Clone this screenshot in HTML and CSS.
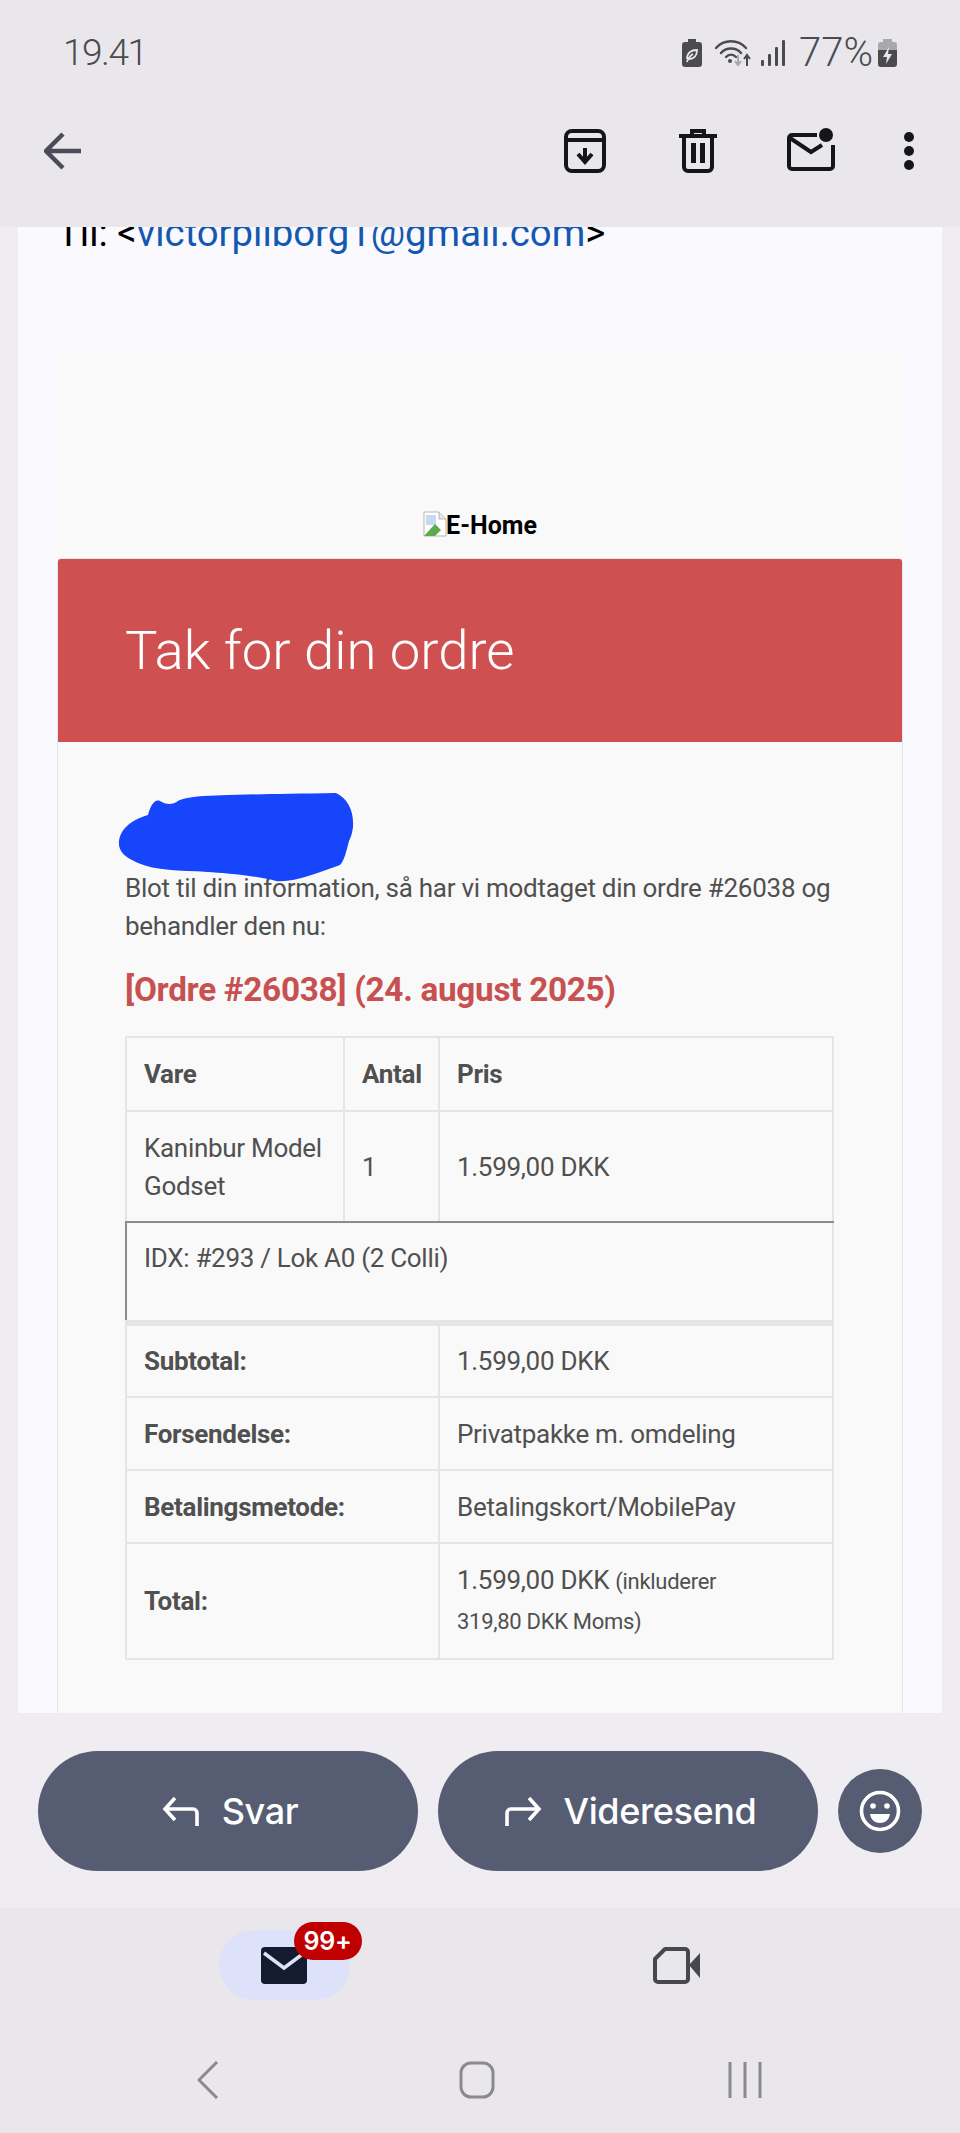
FILE: index.html
```html
<!DOCTYPE html>
<html lang="da">

<head>
    <meta charset="UTF-8">
    <meta name="viewport" content="width=device-width, initial-scale=1.0">
    <title>Tak for din ordre</title>
    <link rel="stylesheet" href="styles.css">
</head>

<body>
    <!-- status bar -->
    <div class="status">
        <span class="clock">19.41</span>
        <div class="statusIcons">
            <svg class="sIcon" width="20" height="28" viewBox="0 0 20 28">
                <path d="M6 0h8v3h3a3 3 0 0 1 3 3v19a3 3 0 0 1-3 3H3a3 3 0 0 1-3-3V6a3 3 0 0 1 3-3h3z" fill="#4b4b4f" />
                <path d="M5 20c0-6 4-9 10-9 0 6-3 9-8 9M5 23c1-4 3-6 6-8" fill="none" stroke="#e9e7ec" stroke-width="1.8" />
            </svg>
            <svg class="sIcon wifi" width="37" height="28" viewBox="0 0 37 28">
                <g fill="none" stroke="#4b4b4f" stroke-width="2.4" stroke-linecap="round">
                    <path d="M1 9C9 0 23 0 31 9" />
                    <path d="M6 14c5-6 15-6 20 0" />
                    <path d="M11 18c3-3 7-3 10 0" />
                </g>
                <circle cx="15" cy="22" r="2" fill="#4b4b4f" />
                <path d="M23 16v10M20 22l3 4 3-4" fill="none" stroke="#a9a9ad" stroke-width="2" />
                <path d="M32 27V17M29 20l3-4 3 4" fill="none" stroke="#4b4b4f" stroke-width="2" />
            </svg>
            <svg class="sIcon signal" width="25" height="26" viewBox="0 0 25 26">
                <g fill="#4b4b4f">
                    <rect x="0" y="20" width="3" height="6" rx="1" />
                    <rect x="7" y="14" width="3" height="12" rx="1" />
                    <rect x="14" y="7" width="3" height="19" rx="1" />
                    <rect x="21" y="0" width="3" height="26" rx="1" />
                </g>
            </svg>
            <span class="percent">77%</span>
            <svg class="sIcon" width="19" height="28" viewBox="0 0 19 28">
                <path d="M5 0h9v3h2a3 3 0 0 1 3 3v5H0V6a3 3 0 0 1 3-3h2z" fill="#a9a9ad" />
                <path d="M0 11h19v14a3 3 0 0 1-3 3H3a3 3 0 0 1-3-3z" fill="#4b4b4f" />
                <path d="M11 8l-6 10h4l-1 7 6-10h-4z" fill="#e9e7ec" />
            </svg>
        </div>
    </div>

    <!-- toolbar -->
    <div class="toolbar">
        <svg class="backArrow" width="38" height="38" viewBox="0 0 38 38">
            <path d="M37 19H3M19 2L2 19l17 17" fill="none" stroke="#4a4d58" stroke-width="4.500" />
        </svg>
        <div class="toolIcons">
            <svg class="tool" width="48" height="46" viewBox="0 0 48 46">
                <rect x="5" y="3" width="38" height="40" rx="6" fill="none" stroke="#15161a" stroke-width="4" />
                <path d="M5 12h38" stroke="#15161a" stroke-width="4" />
                <path d="M24 20v13M17 26l7 8 7-8" fill="none" stroke="#15161a" stroke-width="4" />
            </svg>
            <svg class="tool" width="48" height="46" viewBox="0 0 48 46">
                <path d="M5 8h38M18 8V3h12v5" fill="none" stroke="#15161a" stroke-width="4" />
                <path d="M10 8v31a4 4 0 0 0 4 4h20a4 4 0 0 0 4-4V8" fill="none" stroke="#15161a" stroke-width="4" />
                <path d="M19.500 15v20M28.500 15v20" stroke="#15161a" stroke-width="5" />
            </svg>
            <svg class="tool" width="48" height="46" viewBox="0 0 48 46">
                <path d="M30 7H5a3 3 0 0 0-3 3v28a3 3 0 0 0 3 3h38a3 3 0 0 0 3-3V17" fill="none" stroke="#15161a" stroke-width="4" />
                <path d="M3 10l21 14 11-7" fill="none" stroke="#15161a" stroke-width="4" />
                <circle cx="39" cy="7" r="7" fill="#15161a" />
            </svg>
            <svg class="tool dots" width="24" height="46" viewBox="0 0 24 46">
                <circle cx="12" cy="9" r="5" fill="#15161a" />
                <circle cx="12" cy="23" r="5" fill="#15161a" />
                <circle cx="12" cy="37" r="5" fill="#15161a" />
            </svg>
        </div>
    </div>

    <!-- the mail -->
    <div class="mailArea">
        <div class="mailBody">
            <p class="toLine">Til: &lt;<a class="toMail" href="#">victorpilborg1@gmail.com</a>&gt;</p>

            <div class="logoBox">
                <svg class="brokenImg" width="24" height="26" viewBox="0 0 24 26">
                    <path d="M1 1h15l7 7v17H1z" fill="#fff" stroke="#b5b5b5" />
                    <path d="M16 1v7h7" fill="#dfe6f5" stroke="#b5b5b5" />
                    <path d="M3 4h10v10H3z" fill="#c9d8f2" />
                    <path d="M1 25l11-12 6 6-6 6z" fill="#5fa84b" />
                </svg>
                <span class="logoText">E-Home</span>
            </div>

            <div class="card">
                <div class="cardHead">
                    <h1 class="thanks">Tak for din ordre</h1>
                </div>
                <div class="cardContent">
                    <!-- scribble that hides the name -->
                    <svg class="scribble" width="240" height="92" viewBox="0 0 240 92">
                        <path d="M1 50C3 36 16 28 30 24C33 12 38 8 42 10C48 14 55 14 60 10C72 4 95 4 218 2C230 8 236 20 235 36C234 44 232 48 231 50C228 62 226 70 222 74C200 82 175 92 158 90C135 84 105 82 90 81C60 79 38 80 20 72C6 66 0 60 1 50Z" fill="#1745fb" />
                    </svg>
                    <p class="intro">Blot til din information, så har vi modtaget din ordre #26038 og behandler den nu:</p>
                    <h2 class="orderTitle">[Ordre #26038] (24. august 2025)</h2>

                    <table class="orderTab">
                        <colgroup>
                            <col class="col1">
                            <col class="col2">
                            <col>
                        </colgroup>
                        <tr class="headRow">
                            <th>Vare</th>
                            <th>Antal</th>
                            <th>Pris</th>
                        </tr>
                        <tr class="itemRow">
                            <td>Kaninbur Model Godset</td>
                            <td>1</td>
                            <td>1.599,00 DKK</td>
                        </tr>
                        <tr class="noteRow">
                            <td colspan="3">IDX: #293 / Lok A0 (2 Colli)</td>
                        </tr>
                        <tr class="sumRow firstSum">
                            <th colspan="2">Subtotal:</th>
                            <td>1.599,00 DKK</td>
                        </tr>
                        <tr class="sumRow">
                            <th colspan="2">Forsendelse:</th>
                            <td>Privatpakke m. omdeling</td>
                        </tr>
                        <tr class="sumRow">
                            <th colspan="2">Betalingsmetode:</th>
                            <td>Betalingskort/MobilePay</td>
                        </tr>
                        <tr class="totalRow">
                            <th colspan="2">Total:</th>
                            <td>1.599,00 DKK <small class="tax">(inkluderer<br>319,80 DKK Moms)</small></td>
                        </tr>
                    </table>
                </div>
            </div>
        </div>
    </div>

    <!-- reply buttons -->
    <div class="actions">
        <button class="actBtn">
            <svg width="38" height="30" viewBox="0 0 38 30">
                <path d="M35 30V17a4 4 0 0 0-4-4H4M13 2L3 13l10 11" fill="none" stroke="#fff" stroke-width="3.600" />
            </svg>
            <span>Svar</span>
        </button>
        <button class="actBtn">
            <svg width="38" height="30" viewBox="0 0 38 30">
                <path d="M3 30V17a4 4 0 0 1 4-4h27M25 2l10 11-10 11" fill="none" stroke="#fff" stroke-width="3.600" />
            </svg>
            <span>Videresend</span>
        </button>
        <button class="emojiBtn">
            <svg width="42" height="42" viewBox="0 0 42 42">
                <circle cx="21" cy="21" r="18.500" fill="none" stroke="#fff" stroke-width="3.600" />
                <circle cx="14" cy="16" r="2.800" fill="#fff" />
                <circle cx="28" cy="16" r="2.800" fill="#fff" />
                <path d="M11 24h20c-1 6-5 9-10 9s-9-3-10-9z" fill="#fff" />
            </svg>
        </button>
    </div>

    <!-- mail / meet tabs -->
    <div class="tabs">
        <div class="tabItem">
            <div class="mailPill">
                <svg width="46" height="37" viewBox="0 0 46 37">
                    <rect width="46" height="37" rx="4" fill="#141b2e" />
                    <path d="M3 6l20 15L43 6" fill="none" stroke="#dde1f9" stroke-width="3.500" />
                </svg>
                <span class="badge">99+</span>
            </div>
        </div>
        <div class="tabItem">
            <svg width="47" height="37" viewBox="0 0 47 37">
                <path d="M12 2h20a3 3 0 0 1 3 3v27a3 3 0 0 1-3 3H5a3 3 0 0 1-3-3V12z" fill="none" stroke="#47484f" stroke-width="4" stroke-linejoin="round" />
                <path d="M36 18L47 6v25z" fill="#47484f" />
            </svg>
        </div>
    </div>

    <!-- android nav -->
    <div class="navBar">
        <svg width="22" height="38" viewBox="0 0 22 38">
            <path d="M20 1L2 19l18 18" fill="none" stroke="#8a8a8e" stroke-width="3" />
        </svg>
        <svg class="homeBtn" width="36" height="38" viewBox="0 0 36 38">
            <rect x="2" y="2" width="32" height="34" rx="10" fill="none" stroke="#8a8a8e" stroke-width="3" />
        </svg>
        <svg width="36" height="38" viewBox="0 0 36 38">
            <path d="M3 1v36M18 1v36M33 1v36" stroke="#8a8a8e" stroke-width="3" />
        </svg>
    </div>
</body>

</html>
```

FILE: styles.css
```css
* {
    box-sizing: border-box;
}

html,
body {
    margin: 0;
    padding: 0;
}

body {
    width: 960px;
    height: 2133px;
    overflow: hidden;
    display: flex;
    flex-direction: column;
    background-color: #e9e7ec;
    font-family: Roboto, "Liberation Sans", sans-serif;
}

.status {
    height: 105px;
    padding: 0 63px;
    display: flex;
    align-items: center;
    justify-content: space-between;
    color: #4b4b4f;
}

.clock {
    font-size: 37px;
    font-weight: 300;
    letter-spacing: -1.500px;
}

.percent {
    font-size: 40px;
    font-weight: 300;
}

.statusIcons {
    display: flex;
    align-items: center;
}

.wifi {
    margin-left: 13px;
}

.signal {
    margin-left: 9px;
}

.percent {
    margin: 0 5px 0 13px;
}

.toolbar {
    height: 122px;
    padding: 0 39px 30px 44px;
    display: flex;
    align-items: center;
    justify-content: space-between;
}

.toolIcons {
    display: flex;
    align-items: center;
    gap: 65px;
}

.dots {
    margin-left: -3px;
}

.mailArea {
    height: 1486px;
    padding: 0 18px;
    background-color: #efedf2;
    overflow: hidden;
}

.mailBody {
    height: 100%;
    overflow: hidden;
    padding: 0 39px;
    background-color: #f9f9fe;
}

.toLine {
    margin: -15px 0 0 0;
    height: 137px;
    font-size: 38.300px;
    line-height: 42px;
    color: #000;
}

.toMail {
    color: #1558b0;
    text-decoration: none;
}

.logoBox {
    height: 209px;
    padding-bottom: 17px;
    display: flex;
    align-items: flex-end;
    justify-content: center;
    background-color: #f9f9f9;
}

.logoText {
    font-size: 25px;
    font-weight: bold;
    line-height: 30px;
    color: #000;
}

.brokenImg {
    margin: 0 -1px 4px 0;
}

.card {
    border: 1px solid #e5e5e5;
    border-bottom: 0;
    border-radius: 4px 4px 0 0;
    background-color: #f9f9f9;
    height: 1200px;
}

.cardHead {
    height: 183px;
    padding: 0 67px 2px 67px;
    display: flex;
    align-items: center;
    background-color: #cf5050;
    border-radius: 3px 3px 0 0;
}

.thanks {
    margin: 0;
    font-size: 54.500px;
    font-weight: 300;
    color: #fff;
}

.cardContent {
    position: relative;
    padding: 127px 67px 0 67px;
    color: #505050;
}

.scribble {
    position: absolute;
    left: 60px;
    top: 49px;
}

.intro {
    margin: 0;
    font-size: 26px;
    line-height: 38px;
    letter-spacing: -0.270px;
}

.orderTitle {
    margin: 24px 0 25px;
    font-size: 33.300px;
    line-height: 42px;
    letter-spacing: -0.3px;
    font-weight: bold;
    color: #c75050;
}

.orderTab {
    width: 709px;
    border-collapse: collapse;
    table-layout: fixed;
    font-size: 26px;
    line-height: 38px;
    letter-spacing: -0.3px;
}

.col1 {
    width: 218px;
}

.col2 {
    width: 95px;
}

.orderTab th,
.orderTab td {
    padding: 0 17px;
    border: 2px solid #e5e5e5;
    text-align: left;
    font-weight: normal;
}

.orderTab th {
    font-weight: bold;
}

.headRow {
    height: 74px;
}

.itemRow {
    height: 111px;
}

.orderTab .itemRow td {
    border-bottom: 2px solid #8c8c8c;
}

.noteRow {
    height: 101px;
}

.orderTab .noteRow td {
    vertical-align: top;
    padding-top: 16px;
    border-left: 2px solid #8c8c8c;
    border-bottom: 6px solid #e5e5e5;
}

.sumRow {
    height: 73px;
}

.firstSum {
    height: 74px;
}

.totalRow {
    height: 116px;
}

.tax {
    font-size: 22px;
}

.actions {
    height: 195px;
    padding: 38px 38px 37px;
    display: flex;
    align-items: flex-start;
    gap: 20px;
    background-color: #efedf2;
}

.actBtn {
    width: 380px;
    height: 120px;
    border: 0;
    border-radius: 60px;
    padding: 0 0 0 4px;
    display: flex;
    align-items: center;
    justify-content: center;
    gap: 22px;
    background-color: #565d72;
    color: #fff;
    font-family: Inter, Roboto, sans-serif;
    font-size: 36px;
    font-weight: 500;
    letter-spacing: -0.4px;
}

.emojiBtn {
    width: 84px;
    height: 84px;
    margin-top: 18px;
    border: 0;
    border-radius: 50%;
    padding: 0;
    display: flex;
    align-items: center;
    justify-content: center;
    background-color: #565d72;
}

.tabs {
    height: 125px;
    padding: 0 184px;
    display: flex;
    align-items: flex-start;
    justify-content: space-between;
}

.tabItem {
    width: 200px;
    height: 92px;
    display: flex;
    align-items: center;
    justify-content: center;
    margin-top: 11px;
}

.mailPill {
    position: relative;
    width: 131px;
    height: 70px;
    border-radius: 35px;
    display: flex;
    align-items: center;
    justify-content: center;
    background-color: #dde1f9;
}

.badge {
    position: absolute;
    left: 75px;
    top: -8px;
    width: 68px;
    height: 38px;
    border-radius: 19px;
    background-color: #c00000;
    color: #fff;
    font-family: Inter, Roboto, sans-serif;
    font-size: 25px;
    font-weight: 600;
    line-height: 38px;
    letter-spacing: -0.3px;
    text-align: center;
}

.navBar {
    height: 100px;
    padding: 28px 197px 0 197px;
    display: flex;
    align-items: flex-start;
    justify-content: space-between;
}

.homeBtn {
    margin-left: 8px;
}
```
